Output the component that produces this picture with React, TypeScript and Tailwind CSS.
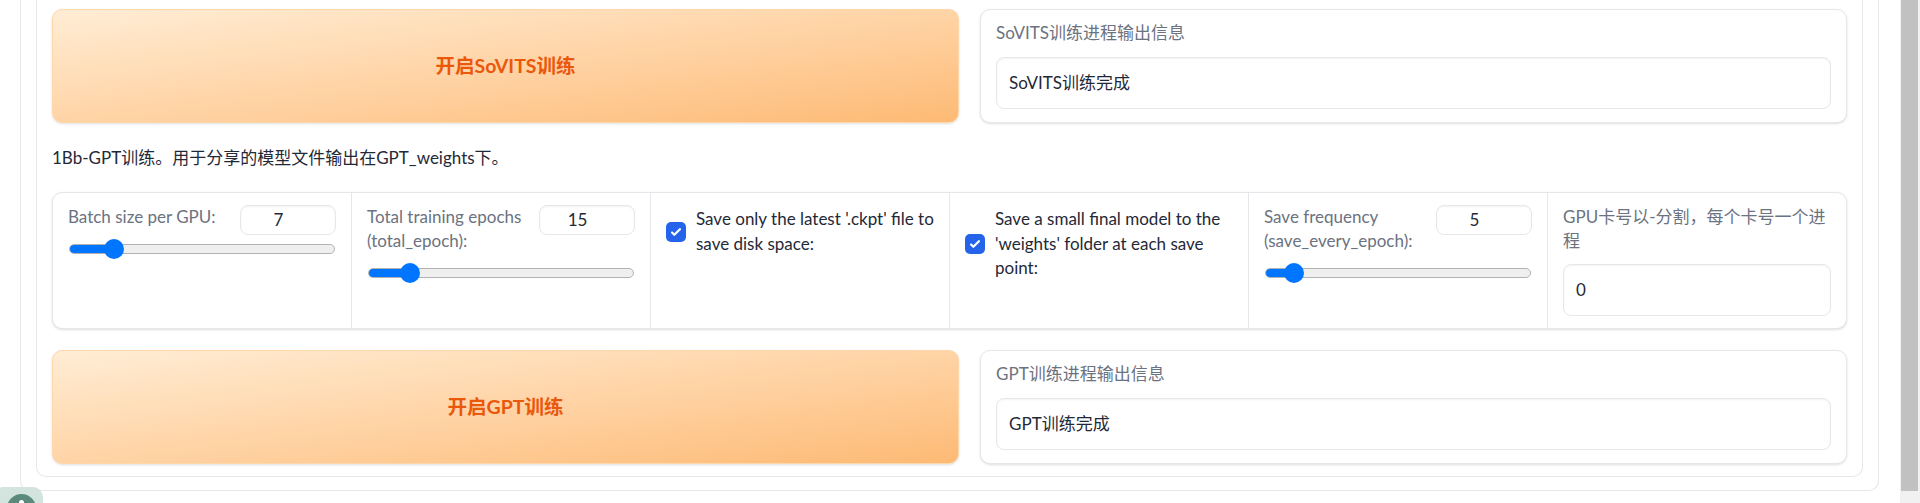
import React from "react";

// native-looking range slider (chrome style)
function Slider({ pos }: { pos: number }) {
  return (
    <div className="relative mx-[1px] h-[20px]">
      <div className="absolute left-0 right-0 top-[5px] h-[10px] overflow-hidden rounded-full border border-[#b2b2b2] bg-[#efefef]">
        <div className="h-full bg-[#0075ff]" style={{ width: pos }} />
      </div>
      <div
        className="absolute top-0 h-[20px] w-[20px] rounded-full bg-[#0075ff]"
        style={{ left: pos - 10 }}
      />
    </div>
  );
}

function NumberBox({ value }: { value: string }) {
  return (
    <div className="flex h-[30px] w-[96px] shrink-0 items-center justify-center rounded-[8px] border border-[#e5e7eb] bg-white pr-[19px] text-[17px] text-[#1f2937] shadow-[inset_0_1px_2px_rgba(0,0,0,0.05)]">
      {value}
    </div>
  );
}

function Check() {
  return (
    <span className="flex h-[20px] w-[20px] shrink-0 items-center justify-center rounded-[5px] bg-[#2563eb]">
      <svg viewBox="0 0 16 16" className="h-[18px] w-[18px]">
        <path
          d="M12.207 4.793a1 1 0 010 1.414l-5 5a1 1 0 01-1.414 0l-2-2a1 1 0 011.414-1.414L6.5 9.086l4.293-4.293a1 1 0 011.414 0z"
          fill="white"
        />
      </svg>
    </span>
  );
}

function TrainRow({ button, label, output }: { button: string; label: string; output: string }) {
  return (
    <div className="flex h-[114px] gap-[21px]">
      <button className="flex w-[907px] shrink-0 items-center justify-center rounded-[10px] border border-[#fed7aa] bg-gradient-to-br from-[#ffedd5] to-[#fdba74] text-[19.5px] font-bold text-[#ea580c] shadow-sm">
        {button}
      </button>
      <div className="flex flex-1 flex-col rounded-[10px] border border-[#e5e7eb] bg-white px-[15px] pt-[11px] shadow-sm">
        <p className="h-[24px] text-[17px] leading-[24px] text-[#6b7280]">{label}</p>
        <div className="mt-[12px] flex h-[52px] items-center rounded-[8px] border border-[#e5e7eb] px-[12px] text-[17px] text-[#1f2937] shadow-[inset_0_1px_2px_rgba(0,0,0,0.05)]">
          {output}
        </div>
      </div>
    </div>
  );
}

export default function App() {
  return (
    <div className="relative flex h-[503px] w-full overflow-hidden bg-white font-['Lato','Noto_Sans_CJK_SC',sans-serif]">
      <div className="flex-1">
        {/* outer block */}
        <div className="ml-[20px] mr-[21px] rounded-b-[10px] border-x border-b border-[#e5e7eb] px-[15px] pb-[13px]">
          {/* inner block */}
          <div className="rounded-b-[10px] border-x border-b border-[#e5e7eb] px-[15px] pb-[12px] pt-[9px]">
            <TrainRow button="开启SoVITS训练" label="SoVITS训练进程输出信息" output="SoVITS训练完成" />

            <p className="mt-[23px] h-[24px] text-[17px] leading-[24px] text-[#1f2937]">
              1Bb-GPT训练。用于分享的模型文件输出在GPT_weights下。
            </p>

            {/* settings */}
            <div className="mt-[22px] grid grid-cols-6 gap-px overflow-hidden rounded-[10px] border border-[#e5e7eb] bg-[#e5e7eb] shadow-sm">
              <div className="bg-white px-[15px] pt-[12px]">
                <div className="flex items-start justify-between gap-[8px]">
                  <span className="pb-[6px] text-[17px] leading-[24px] text-[#6b7280]">Batch size per GPU:</span>
                  <NumberBox value="7" />
                </div>
                <div className="mt-[4px]">
                  <Slider pos={45} />
                </div>
              </div>

              <div className="bg-white px-[15px] pt-[12px]">
                <div className="flex items-start justify-between gap-[8px]">
                  <span className="pb-[6px] text-[17px] leading-[24px] text-[#6b7280]">
                    Total training epochs (total_epoch):
                  </span>
                  <NumberBox value="15" />
                </div>
                <div className="mt-[4px]">
                  <Slider pos={42} />
                </div>
              </div>

              <div className="bg-white px-[15px] pt-[14px]">
                <label className="flex items-center gap-[10px]">
                  <Check />
                  <span className="text-[17px] leading-[24.5px] text-[#1f2937]">
                    Save only the latest '.ckpt' file to save disk space:
                  </span>
                </label>
              </div>

              <div className="bg-white px-[15px] pt-[14px]">
                <label className="flex items-center gap-[10px]">
                  <Check />
                  <span className="text-[17px] leading-[24.5px] text-[#1f2937]">
                    Save a small final model to the 'weights' folder at each save point:
                  </span>
                </label>
              </div>

              <div className="bg-white px-[15px] pt-[12px]">
                <div className="flex items-start justify-between gap-[8px]">
                  <span className="pb-[6px] text-[17px] leading-[24px] text-[#6b7280]">
                    Save frequency (save_every_epoch):
                  </span>
                  <NumberBox value="5" />
                </div>
                <div className="mt-[4px]">
                  <Slider pos={29} />
                </div>
              </div>

              <div className="bg-white px-[15px] pb-[12px] pt-[12px]">
                <p className="text-[17px] leading-[24px] text-[#6b7280]">GPU卡号以-分割，每个卡号一个进程</p>
                <div className="mt-[11px] flex h-[52px] items-center rounded-[8px] border border-[#e5e7eb] px-[12px] text-[17px] text-[#1f2937] shadow-[inset_0_1px_2px_rgba(0,0,0,0.05)]">
                  0
                </div>
              </div>
            </div>

            <div className="mt-[21px]">
              <TrainRow button="开启GPT训练" label="GPT训练进程输出信息" output="GPT训练完成" />
            </div>
          </div>
        </div>
      </div>

      {/* scrollbar */}
      <div className="flex w-[20px] shrink-0 bg-[#f1f1f1]">
        <div className="ml-[1px] h-[491px] w-[17px] bg-[#c1c1c1]" />
      </div>

      {/* floating avatar button, bottom-left */}
      <div className="absolute left-0 top-[487px] h-[30px] w-[43px] rounded-tr-[10px] rounded-tl-[2px] bg-[#d3e4df]">
        <div className="absolute left-[7px] top-[7px] h-[29px] w-[29px] rounded-full bg-[#5b8a7d]">
          <div className="absolute left-[12px] top-[6px] h-[5px] w-[5px] rounded-full bg-white" />
        </div>
      </div>
    </div>
  );
}
